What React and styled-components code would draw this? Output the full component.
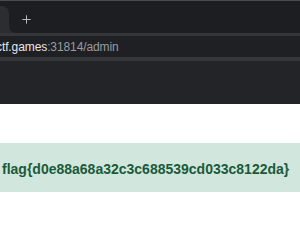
import styled, { createGlobalStyle } from "styled-components";
import { Plus } from "lucide-react";

const Global = createGlobalStyle`
  html, body {
    margin: 0;
    padding: 0;
    background: #ffffff;
  }
  body {
    width: 300px;
    height: 240px;
    overflow: hidden;
    font-family: "Liberation Sans", Arial, sans-serif;
  }
`;

const Browser = styled.div`
  width: 300px;
  display: flex;
  flex-direction: column;
`;

const TopEdge = styled.div`
  height: 1px;
  background: #4a4b4f;
`;

const TabStrip = styled.div`
  height: 32px;
  display: flex;
  background: #1d1e21;
`;

const ActiveTab = styled.div`
  width: 9px;
  margin-top: 5px;
  background: #2c2d30;
  border-top-right-radius: 7px;
`;

const TabRest = styled.div`
  flex: 1;
  display: flex;
  background: linear-gradient(#1d1e21 0 70%, #2c2d30 70% 100%);
`;

const NewTabArea = styled.div`
  flex: 1;
  display: flex;
  align-items: center;
  padding: 4px 0 0 11px;
  background: #1d1e21;
  border-bottom-left-radius: 7px;
  color: #c6c6c8;
`;

const Toolbar = styled.div`
  background: #35363a;
  padding: 3px 0 4px;
`;

const Omnibox = styled.div`
  height: 21px;
  display: flex;
  align-items: center;
  background: #1f2023;
  font-size: 12px;
  letter-spacing: -0.1px;
  white-space: nowrap;
`;

const UrlText = styled.span`
  margin-left: -4px;
  color: ${(p) => (p.$dim ? "#9b9ca0" : "#e6e6e8")};
  margin-left: ${(p) => (p.$dim ? "0" : "-4px")};
`;

const DarkHeader = styled.div`
  height: 43px;
  background: #222428;
`;

const Page = styled.div`
  padding-top: 39px;
  background: #ffffff;
`;

const Alert = styled.div`
  height: 49px;
  display: flex;
  align-items: center;
  padding-left: 2px;
  padding-top: 2px;
  box-sizing: border-box;
  background: #d1e7dd;
  color: #1a5a3a;
  font-size: 14px;
  font-weight: 700;
  white-space: nowrap;
`;

export default function App() {
  return (
    <>
      <Global />
      <Browser>
        <TopEdge />
        <TabStrip>
          <ActiveTab />
          <TabRest>
            <NewTabArea>
              <Plus size={13} strokeWidth={1.7} />
            </NewTabArea>
          </TabRest>
        </TabStrip>
        <Toolbar>
          <Omnibox>
            <UrlText>ctf.games</UrlText>
            <UrlText $dim>:31814/admin</UrlText>
          </Omnibox>
        </Toolbar>
        <DarkHeader />
        <Page>
          <Alert>flag{"{"}d0e88a68a32c3c688539cd033c8122da{"}"}</Alert>
        </Page>
      </Browser>
    </>
  );
}
